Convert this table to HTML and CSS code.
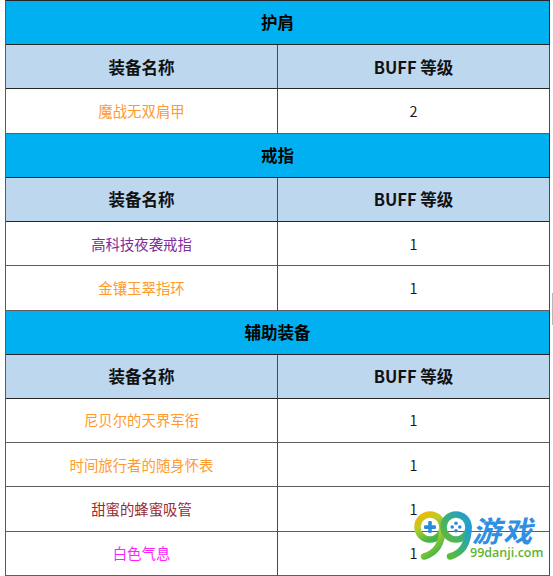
FILE: index.html
```html
<!DOCTYPE html>
<html lang="zh-CN">
<head>
<meta charset="utf-8">
<title>装备 BUFF 等级</title>
<link rel="stylesheet" href="styles.css">
</head>
<body>
<div class="page">
  <div class="sheet">
    <div class="cell section">护肩</div>
    <div class="cell head">装备名称</div>
    <div class="cell head">BUFF 等级</div>
    <div class="cell item orange">魔战无双肩甲</div>
    <div class="cell num">2</div>

    <div class="cell section">戒指</div>
    <div class="cell head">装备名称</div>
    <div class="cell head">BUFF 等级</div>
    <div class="cell item purple">高科技夜袭戒指</div>
    <div class="cell num">1</div>
    <div class="cell item orange">金镶玉翠指环</div>
    <div class="cell num">1</div>

    <div class="cell section">辅助装备</div>
    <div class="cell head">装备名称</div>
    <div class="cell head">BUFF 等级</div>
    <div class="cell item orange">尼贝尔的天界军衔</div>
    <div class="cell num">1</div>
    <div class="cell item orange">时间旅行者的随身怀表</div>
    <div class="cell num">1</div>
    <div class="cell item maroon">甜蜜的蜂蜜吸管</div>
    <div class="cell num">1</div>
    <div class="cell item magenta">白色气息</div>
    <div class="cell num">1</div>
  </div>

  <div class="scroll-thumb"></div>

  <div class="logo">
    <svg class="logo-mark" width="62" height="52" viewBox="0 0 62 52">
      <defs>
        <linearGradient id="g1" x1="0" y1="0" x2="0.55" y2="1">
          <stop offset="0" stop-color="#F7B500"/>
          <stop offset="0.45" stop-color="#B9CC2A"/>
          <stop offset="1" stop-color="#3FB54A"/>
        </linearGradient>
        <linearGradient id="g2" x1="0" y1="1" x2="1" y2="0">
          <stop offset="0" stop-color="#5DBB3A"/>
          <stop offset="0.5" stop-color="#3AB07A"/>
          <stop offset="1" stop-color="#1E9CDC"/>
        </linearGradient>
      </defs>
      <circle cx="18" cy="19" r="12.5" fill="none" stroke="url(#g1)" stroke-width="6.5"/>
      <path d="M30.5 19 C30.5 35 24.5 45 12 48.5" fill="none" stroke="url(#g1)" stroke-width="6.5" stroke-linecap="round"/>
      <circle cx="44" cy="19" r="12.5" fill="none" stroke="url(#g2)" stroke-width="6.5"/>
      <path d="M56.5 19 C56.5 35 50.5 45 38 48.5" fill="none" stroke="url(#g2)" stroke-width="6.5" stroke-linecap="round"/>
      <rect x="12" y="17.3" width="12" height="3.6" rx="1.2" fill="#2B8BDB"/>
      <rect x="16.2" y="13" width="3.6" height="12" rx="1.2" fill="#2B8BDB"/>
      <circle cx="44" cy="15.2" r="1.8" fill="#2B8BDB"/>
      <circle cx="44" cy="22.8" r="1.8" fill="#2B8BDB"/>
      <circle cx="40.2" cy="19" r="1.8" fill="#2B8BDB"/>
      <circle cx="47.8" cy="19" r="1.8" fill="#2B8BDB"/>
    </svg>
    <div class="logo-cn">游戏</div>
    <div class="logo-url">99danji.com</div>
  </div>
</div>
</body>
</html>
```

FILE: styles.css
```css
html, body {
  margin: 0;
  padding: 0;
  background: #ffffff;
}

.page {
  position: relative;
  width: 553px;
  height: 576px;
  overflow: hidden;
  padding-left: 5px;
  box-sizing: border-box;
  font-family: "Noto Sans CJK SC", "Noto Sans", sans-serif;
}

.sheet {
  display: grid;
  grid-template-columns: 272px 272px;
  grid-auto-rows: 44.23px;
  width: 545px;
  border-left: 1px solid #5a5a5a;
  border-top: 1px solid #262626;
  box-sizing: border-box;
}

.cell {
  box-sizing: border-box;
  display: flex;
  align-items: center;
  justify-content: center;
  border-right: 1px solid #4a4a4a;
  border-bottom: 1px solid #5e5e5e;
  background: #ffffff;
  font-size: 14.4px;
  line-height: 1;
}

.section {
  grid-column: 1 / -1;
  background: #00B0F0;
  color: #000;
  font-weight: 700;
  font-size: 16.5px;
  border-bottom-color: #262626;
  border-right-color: #262626;
}

.head {
  background: #BDD7EE;
  color: #111;
  font-weight: 700;
  font-size: 16.5px;
  border-bottom-color: #262626;
}

.num {
  color: #1a1a1a;
}

.orange { color: #FF9A2F; }
.purple { color: #7E2C9A; }
.maroon { color: #9A2A36; }
.magenta { color: #FF1FFF; }

.scroll-thumb {
  position: absolute;
  left: 552px;
  top: 293px;
  width: 1px;
  height: 32px;
  background: #b8b8b8;
}

.logo {
  position: absolute;
  left: 412px;
  top: 508px;
  width: 135px;
  height: 55px;
}

.logo-mark {
  position: absolute;
  left: 0;
  top: 0;
}

.logo-cn {
  position: absolute;
  left: 60px;
  top: 7px;
  font-size: 29px;
  font-weight: 700;
  line-height: 1;
  color: #2E8FE3;
  font-style: italic;
  letter-spacing: 2px;
}

.logo-url {
  position: absolute;
  left: 58px;
  top: 39px;
  font-family: "Open Sans", "Noto Sans", sans-serif;
  font-size: 12.5px;
  line-height: 1;
  color: #5DB531;
  font-weight: 600;
}
```
